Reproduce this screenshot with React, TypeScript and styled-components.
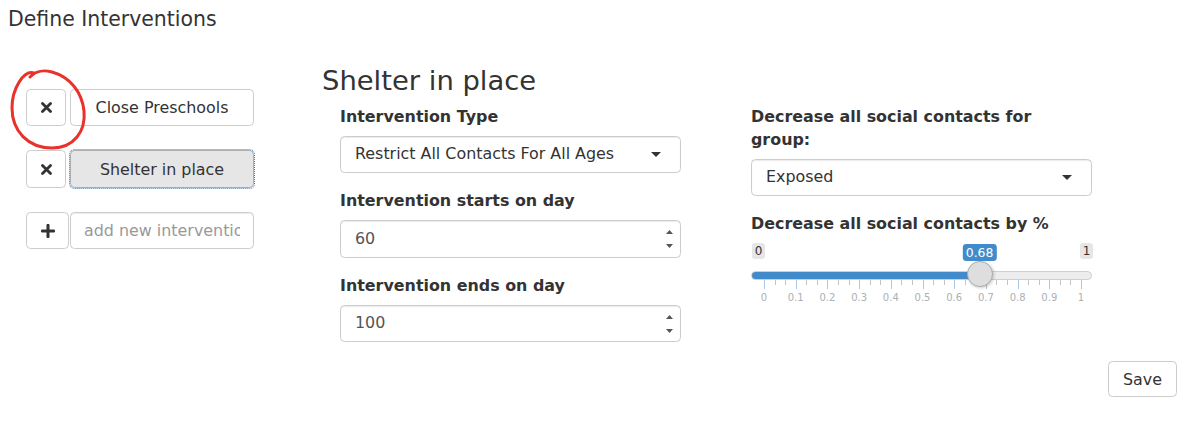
import React from "react";
import styled, { createGlobalStyle, css } from "styled-components";

const GlobalStyle = createGlobalStyle`
  html, body { margin: 0; padding: 0; background: #fff; }
  body {
    font-family: "DejaVu Sans", "Liberation Sans", sans-serif;
    color: #333;
    font-size: 15.9px;
    line-height: 1.42857;
  }
  * { box-sizing: border-box; }
`;

const Page = styled.div`
  position: relative;
  width: 1185px;
  height: 423px;
  padding: 8px 8px 0 8px;
`;

const Title = styled.h4`
  margin: 0;
  font-size: 20.45px;
  line-height: 22.5px;
  font-weight: 400;
  color: #333;
`;

const Row = styled.div`
  display: flex;
  align-items: flex-start;
  margin-top: 35.3px;
`;

const LeftCol = styled.div`
  width: 314px;
  flex: none;
  padding: 23.2px 0 0 18px;
`;

const InterventionList = styled.div`
  display: grid;
  grid-template-columns: 44px 184px;
  grid-auto-rows: 37.4px;
  row-gap: 24.1px;
`;

const Btn = styled.button`
  font-family: inherit;
  font-size: 15.9px;
  color: #333;
  background: #fff;
  border: 1px solid #ccc;
  border-radius: 4.5px;
  height: 37.4px;
  padding: 0 13px;
  display: inline-flex;
  align-items: center;
  justify-content: center;
  cursor: pointer;
`;

const IconBtn = styled(Btn)<{ $w: number }>`
  width: ${(p) => p.$w}px;
  padding: 0;
`;

const NameBtn = styled(Btn)<{ $active?: boolean }>`
  width: 184px;
  ${(p) =>
    p.$active &&
    css`
      background: #e6e6e6;
      border-color: #adadad;
      outline: 1px dotted #3a80c0;
      outline-offset: 0;
    `}
`;

const AddInput = styled.input`
  width: 184px;
  height: 37.4px;
  padding: 0 13px;
  font-family: inherit;
  font-size: 15.9px;
  color: #555;
  background: #fff;
  border: 1px solid #ccc;
  border-radius: 4.5px;
  box-shadow: inset 0 1px 1px rgba(0, 0, 0, 0.075);
  &::placeholder {
    color: #999;
  }
`;

const Main = styled.div`
  flex: 1;
`;

const Heading = styled.h3`
  margin: 0;
  font-size: 27.4px;
  line-height: 30.1px;
  font-weight: 400;
  color: #333;
`;

const Columns = styled.div`
  display: flex;
  gap: 70px;
  padding-left: 18px;
  margin-top: 10px;
`;

const Column = styled.div`
  width: 341px;
  display: flex;
  flex-direction: column;
  gap: 17px;
`;

const FormGroup = styled.div``;

const Label = styled.label`
  display: block;
  font-weight: 700;
  line-height: 22.7px;
  margin-bottom: 7.4px;
  color: #333;
`;

const FieldBox = styled.div<{ $tone?: string }>`
  height: 37.4px;
  border: 1px solid #ccc;
  border-radius: 4.5px;
  background: #fff;
  box-shadow: inset 0 1px 1px rgba(0, 0, 0, 0.08);
  display: flex;
  align-items: center;
  justify-content: space-between;
  color: ${(p) => p.$tone || "#333"};
`;

const SelectBox = styled(FieldBox)`
  padding: 0 19.5px 0 14px;
`;

const NumberBox = styled(FieldBox)`
  padding: 0 7px 0 14px;
`;

const Caret = styled.span`
  width: 0;
  height: 0;
  border-style: solid;
  border-width: 5.6px 5.6px 0 5.6px;
  border-color: #333 transparent transparent transparent;
`;

const SliderWrap = styled.div`
  position: relative;
  height: 64px;
`;

const EdgeTag = styled.span<{ $side: "left" | "right" }>`
  position: absolute;
  top: 0;
  ${(p) => (p.$side === "left" ? "left: 1px;" : "right: -1px;")}
  font-size: 12px;
  line-height: 14px;
  padding: 1px 2.7px;
  background: #e6e6e6;
  border-radius: 3px;
  color: #333;
`;

const Bubble = styled.span`
  position: absolute;
  top: 0.8px;
  transform: translateX(-50%);
  font-size: 12.4px;
  line-height: 15px;
  padding: 1px 3.4px;
  background: #428bca;
  border-radius: 3.4px;
  color: #fff;
  white-space: nowrap;
`;

const Track = styled.div`
  position: absolute;
  top: 28px;
  left: 0;
  right: 0;
  height: 9px;
  background: #ededed;
  border: 1px solid #cfcfcf;
  border-radius: 9px;
  overflow: hidden;
`;

const Fill = styled.div`
  height: 100%;
  background: #428bca;
`;

const Handle = styled.div`
  position: absolute;
  top: 17.8px;
  width: 26px;
  height: 26px;
  margin-left: -13px;
  border-radius: 50%;
  background: #dedede;
  border: 1px solid #ababab;
  box-shadow: 1px 1px 3px rgba(0, 0, 0, 0.2);
`;

const Grid = styled.div`
  position: absolute;
  top: 37px;
  left: 13px;
  width: 317px;
  height: 24px;
`;

const Tick = styled.span<{ $major?: boolean }>`
  position: absolute;
  top: 0;
  width: 1px;
  height: ${(p) => (p.$major ? 8.5 : 4.5)}px;
  background: ${(p) => (p.$major ? "#a9c9ea" : "#c4c4c4")};
`;

const TickText = styled.span`
  position: absolute;
  top: 12px;
  transform: translateX(-50%);
  font-size: 10px;
  line-height: 12px;
  color: #abb0b6;
  white-space: nowrap;
`;

const Footer = styled.div`
  display: flex;
  justify-content: flex-end;
  margin-top: 18.6px;
`;

const SaveBtn = styled(Btn)`
  width: 69px;
  height: 36.5px;
`;

const Annotation = styled.svg`
  position: absolute;
  left: 0;
  top: 0;
  pointer-events: none;
`;

const TimesIcon = () => (
  <svg width="11" height="11" viewBox="0 0 11 11">
    <path d="M1.5 1.5 L9.5 9.5 M9.5 1.5 L1.5 9.5" stroke="#333" strokeWidth="2.8" strokeLinecap="round" />
  </svg>
);

const PlusIcon = () => (
  <svg width="14" height="14" viewBox="0 0 14 14">
    <path d="M7 1.2 V12.8 M1.2 7 H12.8" stroke="#333" strokeWidth="3" strokeLinecap="round" />
  </svg>
);

const Spinner = () => (
  <svg width="7" height="18" viewBox="0 0 7 18">
    <path d="M0 4 L3.5 0 L7 4 Z" fill="#555" />
    <path d="M0 14 L3.5 18 L7 14 Z" fill="#555" />
  </svg>
);

const RangeSlider = ({ value }: { value: number }) => {
  const ticks: { pos: number; major: boolean; label?: string }[] = [];
  for (let i = 0; i <= 10; i++) {
    ticks.push({ pos: i * 10, major: true, label: i === 0 ? "0" : i === 10 ? "1" : (i / 10).toFixed(1) });
    if (i < 10) {
      ticks.push({ pos: i * 10 + 10 / 3, major: false });
      ticks.push({ pos: i * 10 + 20 / 3, major: false });
    }
  }
  const handleLeft = 13 + value * 317;
  return (
    <SliderWrap>
      <EdgeTag $side="left">0</EdgeTag>
      <EdgeTag $side="right">1</EdgeTag>
      <Track>
        <Fill style={{ width: `${handleLeft}px` }} />
      </Track>
      <Grid>
        {ticks.map((t, i) => (
          <React.Fragment key={i}>
            <Tick $major={t.major} style={{ left: `${t.pos}%` }} />
            {t.label && <TickText style={{ left: `${t.pos}%` }}>{t.label}</TickText>}
          </React.Fragment>
        ))}
      </Grid>
      <Handle style={{ left: `${handleLeft}px` }} />
      <Bubble style={{ left: `${handleLeft}px` }}>{value}</Bubble>
    </SliderWrap>
  );
};

export default function App() {
  return (
    <>
      <GlobalStyle />
      <Page>
        <Title>Define Interventions</Title>
        <Row>
          <LeftCol>
            <InterventionList>
              <IconBtn $w={40}>
                <TimesIcon />
              </IconBtn>
              <NameBtn>Close Preschools</NameBtn>
              <IconBtn $w={40}>
                <TimesIcon />
              </IconBtn>
              <NameBtn $active>Shelter in place</NameBtn>
              <IconBtn $w={43}>
                <PlusIcon />
              </IconBtn>
              <AddInput placeholder="add new intervention" />
            </InterventionList>
          </LeftCol>
          <Main>
            <Heading>Shelter in place</Heading>
            <Columns>
              <Column>
                <FormGroup>
                  <Label>Intervention Type</Label>
                  <SelectBox>
                    <span>Restrict All Contacts For All Ages</span>
                    <Caret />
                  </SelectBox>
                </FormGroup>
                <FormGroup>
                  <Label>Intervention starts on day</Label>
                  <NumberBox $tone="#555">
                    <span>60</span>
                    <Spinner />
                  </NumberBox>
                </FormGroup>
                <FormGroup>
                  <Label>Intervention ends on day</Label>
                  <NumberBox $tone="#555">
                    <span>100</span>
                    <Spinner />
                  </NumberBox>
                </FormGroup>
              </Column>
              <Column>
                <FormGroup>
                  <Label>Decrease all social contacts for group:</Label>
                  <SelectBox>
                    <span>Exposed</span>
                    <Caret />
                  </SelectBox>
                </FormGroup>
                <FormGroup>
                  <Label>Decrease all social contacts by %</Label>
                  <RangeSlider value={0.68} />
                </FormGroup>
              </Column>
            </Columns>
          </Main>
        </Row>
        <Footer>
          <SaveBtn>Save</SaveBtn>
        </Footer>
        <Annotation width="100" height="160" viewBox="0 0 100 160">
          <path
            d="M34 73 C 24 70, 12 88, 12 108 C 12 131, 28 148, 52 148 C 74 148, 86 131, 84 111 C 82 92, 70 77, 52 72 C 44 70, 37 70, 30 77"
            fill="none"
            stroke="#e8322b"
            strokeWidth="3"
            strokeLinecap="round"
          />
        </Annotation>
      </Page>
    </>
  );
}
